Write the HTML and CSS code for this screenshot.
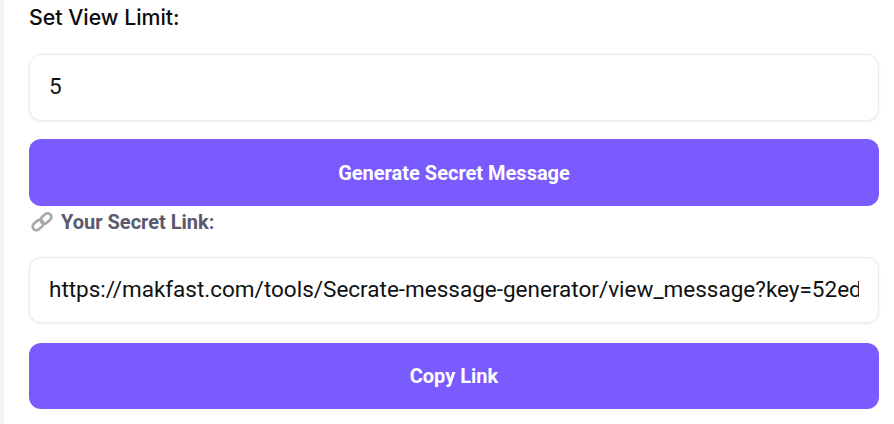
FILE: index.html
```html
<!DOCTYPE html>
<html lang="en">
<head>
    <meta charset="UTF-8">
    <title>Secret Message Generator</title>
    <link rel="stylesheet" href="styles.css">
</head>
<body>
    <div class="card">
        <label class="view-label" for="limit">Set View Limit:</label>
        <input class="field" type="text" id="limit" value="5">
        <button class="btn" type="button">Generate Secret Message</button>

        <div class="link-label">
            <svg class="link-icon" viewBox="0 0 20 20" width="22" height="22" fill="none">
                <g stroke="#a9a9a9" stroke-width="2.4" fill="none">
                    <rect x="1" y="9.4" width="10.8" height="6.8" rx="3.4" transform="rotate(-42 6.4 12.8)"/>
                    <rect x="8.2" y="3.4" width="10.8" height="6.8" rx="3.4" transform="rotate(-42 13.6 6.8)"/>
                </g>
            </svg>
            <span>Your Secret Link:</span>
        </div>
        <input class="field link-field" type="text" value="https://makfast.com/tools/Secrate-message-generator/view_message?key=52ed8f1c07a94e36">
        <button class="btn btn-copy" type="button">Copy Link</button>
    </div>
</body>
</html>
```

FILE: styles.css
```css
* {
    margin: 0;
    padding: 0;
    box-sizing: border-box;
}

body {
    height: 424px;
    overflow: hidden;
    background-color: #f5f5f5;
    padding-left: 4px;
}

.card {
    height: 424px;
    background-color: white;
    padding: 5px 15px 0 25px;
}

.view-label {
    display: block;
    font-family: Inter, sans-serif;
    font-size: 21.3px;
    font-weight: 500;
    line-height: 24px;
    color: #0c0c0c;
    margin-bottom: 25px;
}

.field {
    display: block;
    width: 100%;
    height: 67px;
    padding: 0 19px 4px;
    font-family: Roboto, sans-serif;
    font-size: 22.5px;
    color: #111;
    background-color: white;
    border: 1px solid #ebebeb;
    border-radius: 12px;
    box-shadow: 0 1px 3px rgba(0, 0, 0, 0.07);
    outline: none;
}

.btn {
    display: block;
    width: 100%;
    height: 67px;
    margin-top: 18px;
    font-family: Roboto, sans-serif;
    font-size: 20px;
    font-weight: 700;
    color: white;
    background-color: #795bff;
    border: none;
    border-radius: 12px;
}

.link-label {
    display: flex;
    align-items: center;
    gap: 8px;
    height: 32px;
    margin-bottom: 19px;
    padding-left: 2px;
    font-family: Roboto, sans-serif;
    font-size: 20px;
    font-weight: 700;
    color: #5a5a6e;
}

.link-field {
    height: 66px;
    padding-bottom: 2px;
}

.btn-copy {
    height: 66px;
    margin-top: 20px;
}
```
